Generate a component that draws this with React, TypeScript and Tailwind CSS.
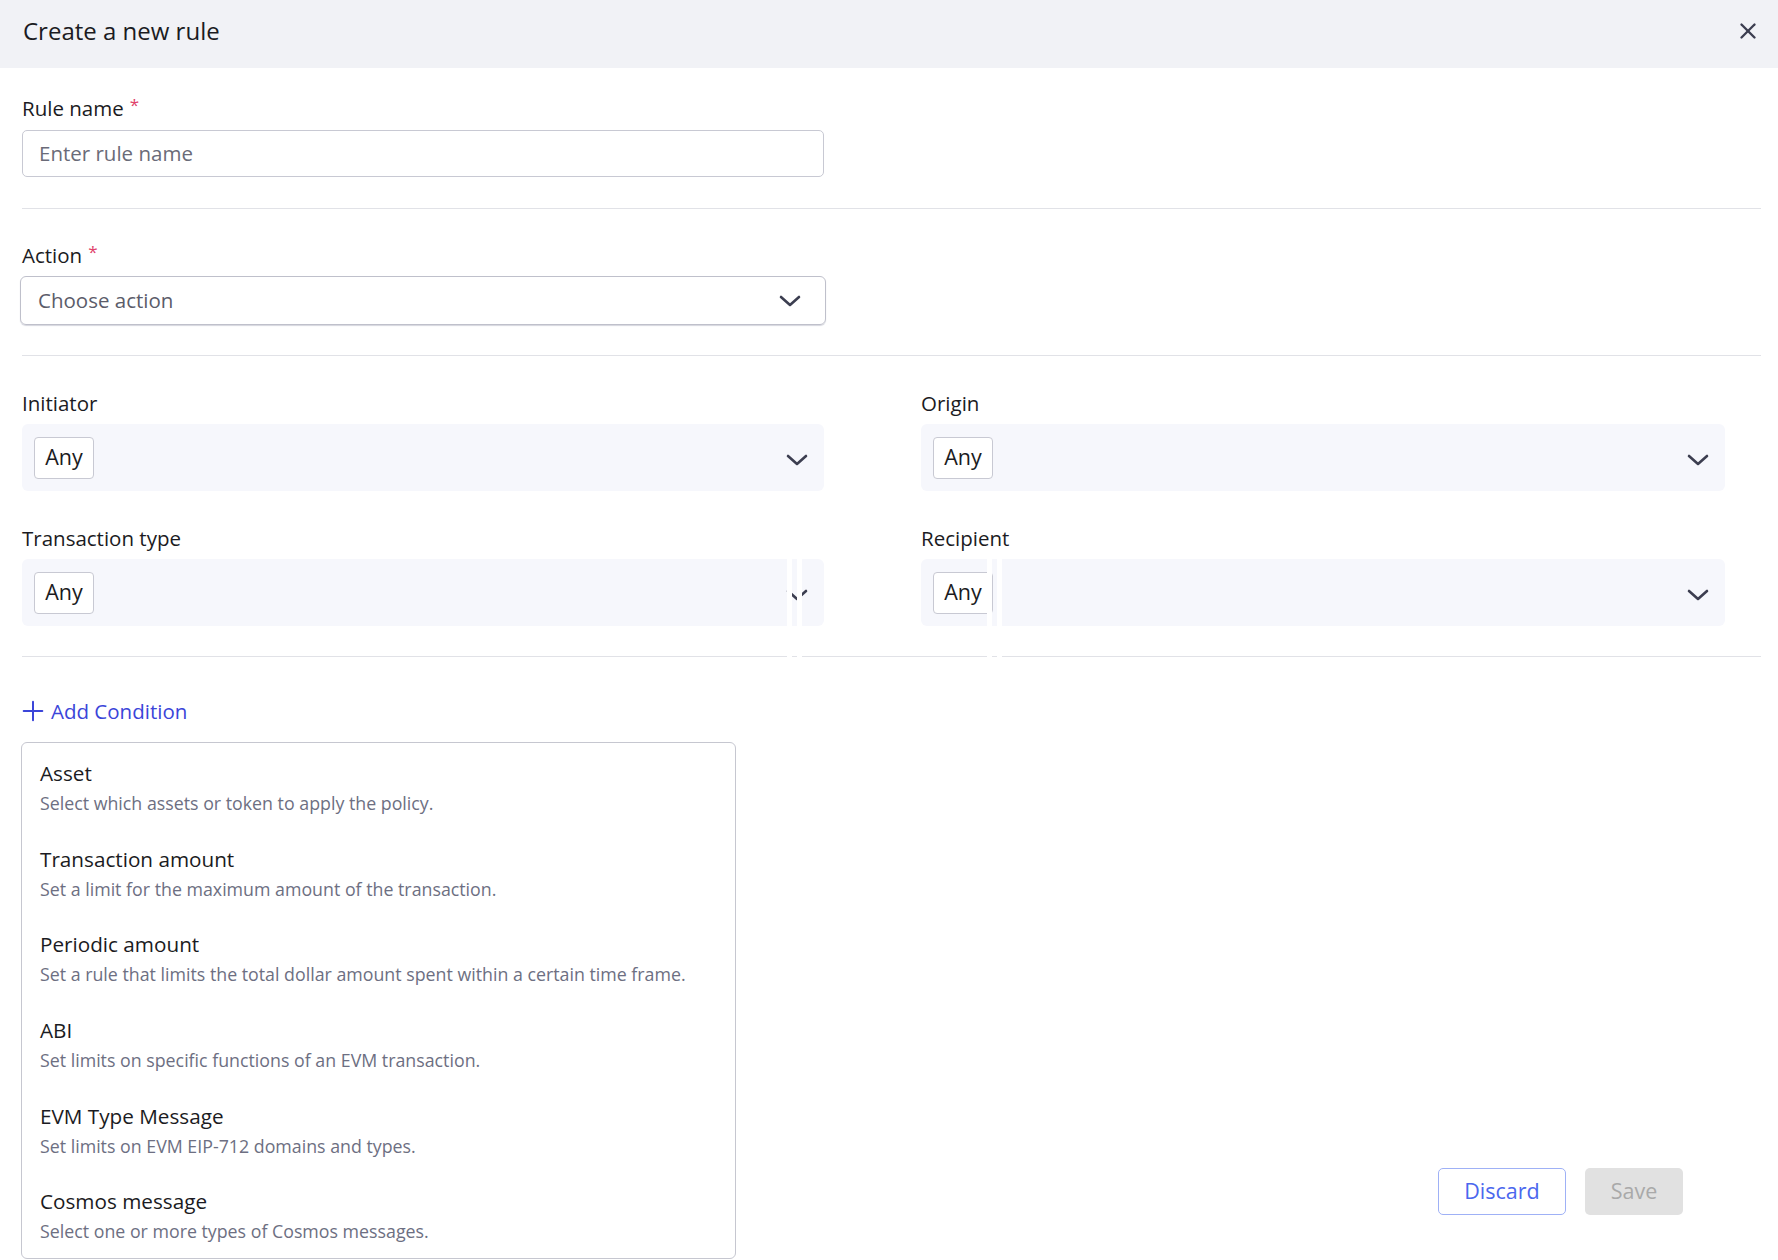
import { X, Plus } from "lucide-react";

type Item = { title: string; desc: string };

const conditions: Item[] = [
  { title: "Asset", desc: "Select which assets or token to apply the policy." },
  { title: "Transaction amount", desc: "Set a limit for the maximum amount of the transaction." },
  { title: "Periodic amount", desc: "Set a rule that limits the total dollar amount spent within a certain time frame." },
  { title: "ABI", desc: "Set limits on specific functions of an EVM transaction." },
  { title: "EVM Type Message", desc: "Set limits on EVM EIP-712 domains and types." },
  { title: "Cosmos message", desc: "Select one or more types of Cosmos messages." },
];

function Chevron({ className }: { className?: string }) {
  return (
    <svg width="22" height="14" viewBox="0 0 22 14" fill="none" className={className}>
      <polyline points="2,3 11,11 20,3" stroke="#3c3e50" strokeWidth="2.6" strokeLinecap="round" strokeLinejoin="round" />
    </svg>
  );
}

function Label({ text, required }: { text: string; required?: boolean }) {
  return (
    <div className="h-[24px] flex items-start text-[20.5px] leading-[24px] text-[#1b1b22]">
      {text}
      {required && <span className="ml-[6px] text-[17px] leading-[18px] text-[#e0416a]">*</span>}
    </div>
  );
}

function AnySelect({ label }: { label: string }) {
  return (
    <div>
      <Label text={label} />
      <div className="mt-[9px] h-[67px] rounded-[6px] bg-[#f6f7fc] pl-[12px] pr-[16px] flex items-center justify-between">
        <span className="h-[42px] w-[60px] justify-center flex items-center rounded-[4px] border border-[#c8c9d3] bg-white text-[21.5px] text-[#1b1b22]">
          Any
        </span>
        <Chevron className="mt-[4px]" />
      </div>
    </div>
  );
}

export default function App() {
  return (
    <div
      className="relative h-[1260px] w-full overflow-hidden bg-white"
      style={{ fontFamily: "'Open Sans', Lato, sans-serif" }}
    >
      {/* Header */}
      <div className="h-[68px] bg-[#f1f2f6] pl-[23px] pr-[17px] pb-[7px] flex items-center justify-between">
        <h1 className="text-[24px] text-[#1b1b22]">Create a new rule</h1>
        <X size={26} strokeWidth={2.2} className="text-[#3c3e50]" />
      </div>

      <div className="pl-[22px] pr-[17px] pt-[28px]">
        {/* Rule name */}
        <Label text="Rule name" required />
        <div className="mt-[10px] w-[802px] h-[47px] rounded-[5px] border border-[#c8c9d3] px-[16px] flex items-center text-[20.5px] text-[#6a6b78]">
          Enter rule name
        </div>

        <div className="mt-[31px] h-px bg-[#e1e2e7]" />

        {/* Action */}
        <div className="mt-[34px]">
          <Label text="Action" required />
        </div>
        <div className="mt-[9px] -ml-[2px] w-[806px] h-[49px] rounded-[6px] border border-[#bfc0cb] shadow-[0_1px_1px_#d5d6de] pl-[17px] pr-[24px] flex items-center justify-between text-[20.5px] text-[#5b5c6a]">
          Choose action
          <Chevron />
        </div>

        <div className="mt-[30px] h-px bg-[#e1e2e7]" />

        {/* Grid of filters */}
        <div className="mt-[35px] grid grid-cols-[802px_804px] gap-x-[97px] gap-y-[35px]">
          <AnySelect label="Initiator" />
          <AnySelect label="Origin" />
          <AnySelect label="Transaction type" />
          <AnySelect label="Recipient" />
        </div>

        <div className="mt-[30px] h-px bg-[#e1e2e7]" />

        {/* Add condition */}
        <div className="relative mt-[42px]">
          <button className="h-[24px] -ml-[5px] flex items-center gap-[2px] text-[20.5px] text-[#3b45d9]">
            <Plus size={32} strokeWidth={1.5} />
            Add Condition
          </button>

          <div className="absolute left-[-1px] top-[43px] w-[715px] h-[517px] rounded-[6px] border border-[#c6c7d0] bg-white pt-[2px] pl-[18px] z-10">
            {conditions.map((c) => (
              <div key={c.title} className="pt-[15px] pb-[15.67px]">
                <div className="text-[20.7px] leading-[26px] text-[#1b1b22]">{c.title}</div>
                <div className="mt-[5px] text-[17.8px] leading-[24px] text-[#6d6f82]">{c.desc}</div>
              </div>
            ))}
          </div>
        </div>

        {/* Footer */}
        <div className="mt-[445px] pr-[78px] flex justify-end gap-[19px]">
          <button className="w-[128px] h-[47px] rounded-[5px] border border-[#9fb1f6] text-[21.5px] text-[#4b67ee]">
            Discard
          </button>
          <button className="w-[98px] h-[47px] rounded-[5px] bg-[#e1e1e1] text-[21.5px] text-[#a9a9a9]">
            Save
          </button>
        </div>
      </div>

      {/* rendering glitch stripes */}
      <div className="absolute left-[787px] top-[559px] w-[5px] h-[104px] bg-white" />
      <div className="absolute left-[797px] top-[559px] w-[5px] h-[104px] bg-white" />
      <div className="absolute left-[987px] top-[559px] w-[5px] h-[104px] bg-white" />
      <div className="absolute left-[997px] top-[559px] w-[5px] h-[104px] bg-white" />
    </div>
  );
}
